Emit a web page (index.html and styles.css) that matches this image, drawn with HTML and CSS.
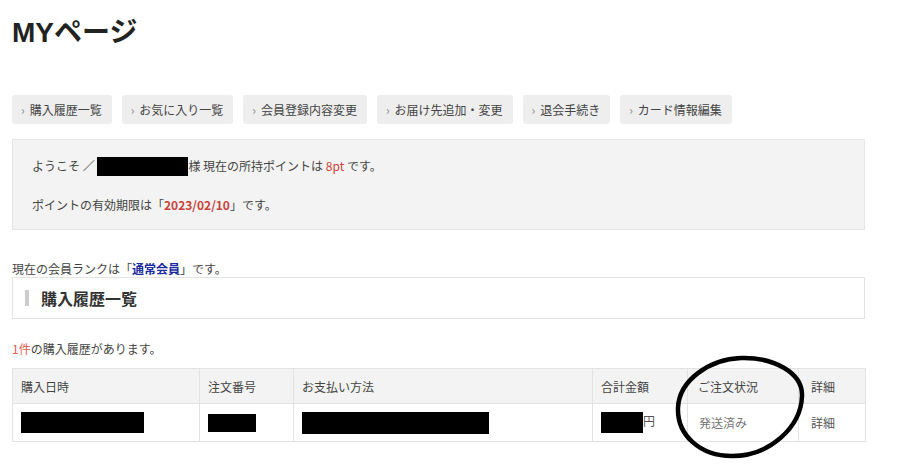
FILE: index.html
```html
<!DOCTYPE html>
<html lang="ja">
<head>
    <meta charset="UTF-8">
    <meta name="viewport" content="width=device-width, initial-scale=1.0">
    <title>MYページ</title>
    <link rel="stylesheet" href="styles.css">
</head>
<body>
    <div class="page">
        <h1 class="page-title">MYページ</h1>

        <ul class="menu">
            <li class="menu-item">購入履歴一覧</li>
            <li class="menu-item">お気に入り一覧</li>
            <li class="menu-item">会員登録内容変更</li>
            <li class="menu-item">お届け先追加・変更</li>
            <li class="menu-item">退会手続き</li>
            <li class="menu-item">カード情報編集</li>
        </ul>

        <div class="welcome">
            <p>ようこそ ／ <span class="mask mask-name"></span>様 現在の所持ポイントは <span class="red">8pt</span> です。</p>
            <p>ポイントの有効期限は「<span class="red strong">2023/02/10</span>」です。</p>
        </div>

        <p class="rank">現在の会員ランクは「<span class="blue">通常会員</span>」です。</p>

        <h2 class="section-title">購入履歴一覧</h2>

        <p class="count"><span class="red-light">1件</span>の購入履歴があります。</p>

        <div class="table-wrap">
            <table class="history">
                <colgroup>
                    <col style="width: 187px">
                    <col style="width: 94px">
                    <col style="width: 299px">
                    <col style="width: 95px">
                    <col style="width: 111px">
                    <col style="width: 67px">
                </colgroup>
                <thead>
                    <tr>
                        <th>購入日時</th>
                        <th>注文番号</th>
                        <th>お支払い方法</th>
                        <th>合計金額</th>
                        <th>ご注文状況</th>
                        <th>詳細</th>
                    </tr>
                </thead>
                <tbody>
                    <tr>
                        <td><span class="mask mask-date"></span></td>
                        <td><span class="mask mask-no"></span></td>
                        <td><span class="mask mask-pay"></span></td>
                        <td><span class="mask mask-price"></span>円</td>
                        <td class="status">発送済み</td>
                        <td>詳細</td>
                    </tr>
                </tbody>
            </table>
            <svg class="circle" viewBox="0 0 132 104" width="132" height="104">
                <path d="M 67 3 C 100 2, 129 18, 128 41 C 127 72, 96 101, 58 101 C 26 101, 3 80, 4 53 C 5 25, 36 4, 67 3 Z" fill="none" stroke="#000" stroke-width="4.5"/>
            </svg>
        </div>
    </div>
</body>
</html>
```

FILE: styles.css
```css
body {
    margin: 0;
    min-height: 475px;
    background-color: #fff;
    color: #444;
    font-family: "Noto Sans CJK JP", "Liberation Sans", sans-serif;
    font-size: 12px;
}
.page {
    width: 853px;
    padding: 17px 0 40px 12px;
}
.page-title {
    margin: 0;
    font-size: 28px;
    line-height: 31px;
    font-weight: bold;
    color: #222;
    font-family: "Liberation Sans", "Noto Sans CJK JP", sans-serif;
}
.menu {
    display: flex;
    gap: 10px;
    list-style: none;
    margin: 47px 0 0;
    padding: 0;
}
.menu-item {
    height: 29px;
    line-height: 29px;
    padding: 0 10px 0 9px;
    background-color: #eee;
    border-radius: 3px;
    color: #444;
}
.menu-item::before {
    content: "›";
    color: #888;
    margin-right: 5px;
}
.welcome {
    margin-top: 15px;
    padding: 16px 19px 14px;
    background-color: #f3f3f3;
    border: 1px solid #e6e6e6;
}
.welcome p {
    margin: 0;
    line-height: 20px;
}
.welcome p + p {
    margin-top: 19px;
}
.mask {
    display: inline-block;
    background-color: #000;
    vertical-align: middle;
}
.mask-name {
    width: 91px;
    height: 19px;
    margin-top: -3px;
}
.red {
    color: #c9423b;
}
.strong {
    font-weight: bold;
}
.red-light {
    color: #e0604f;
}
.blue {
    color: #1b2a9e;
    font-weight: bold;
}
.rank {
    margin: 31px 0 0;
    line-height: 16px;
}
.section-title {
    margin: 0;
    height: 40px;
    display: flex;
    align-items: center;
    gap: 12px;
    padding-left: 12px;
    border: 1px solid #e3e3e3;
    font-size: 16px;
    font-weight: bold;
    color: #333;
}
.section-title::before {
    content: "";
    width: 4px;
    height: 16px;
    background-color: #ccc;
}
.count {
    margin: 21px 0 0;
    line-height: 18px;
}
.table-wrap {
    position: relative;
    margin-top: 10px;
}
.history {
    width: 853px;
    border-collapse: collapse;
    table-layout: fixed;
}
.history th,
.history td {
    border: 1px solid #e3e3e3;
    padding: 0 8px;
    text-align: left;
    font-weight: normal;
}
.history th {
    height: 34px;
    background-color: #f3f3f3;
    color: #444;
}
.history td {
    height: 37px;
    color: #555;
}
.history .status {
    color: #777;
    padding-left: 11px;
}
.history th:nth-child(5) {
    padding-left: 10px;
}
.history th:last-child,
.history td:last-child {
    padding-left: 12px;
}
.mask-date {
    width: 123px;
    height: 21px;
}
.mask-no {
    width: 48px;
    height: 18px;
}
.mask-pay {
    width: 187px;
    height: 22px;
}
.mask-price {
    width: 42px;
    height: 21px;
}
.circle {
    position: absolute;
    left: 662px;
    top: -13px;
}
```
